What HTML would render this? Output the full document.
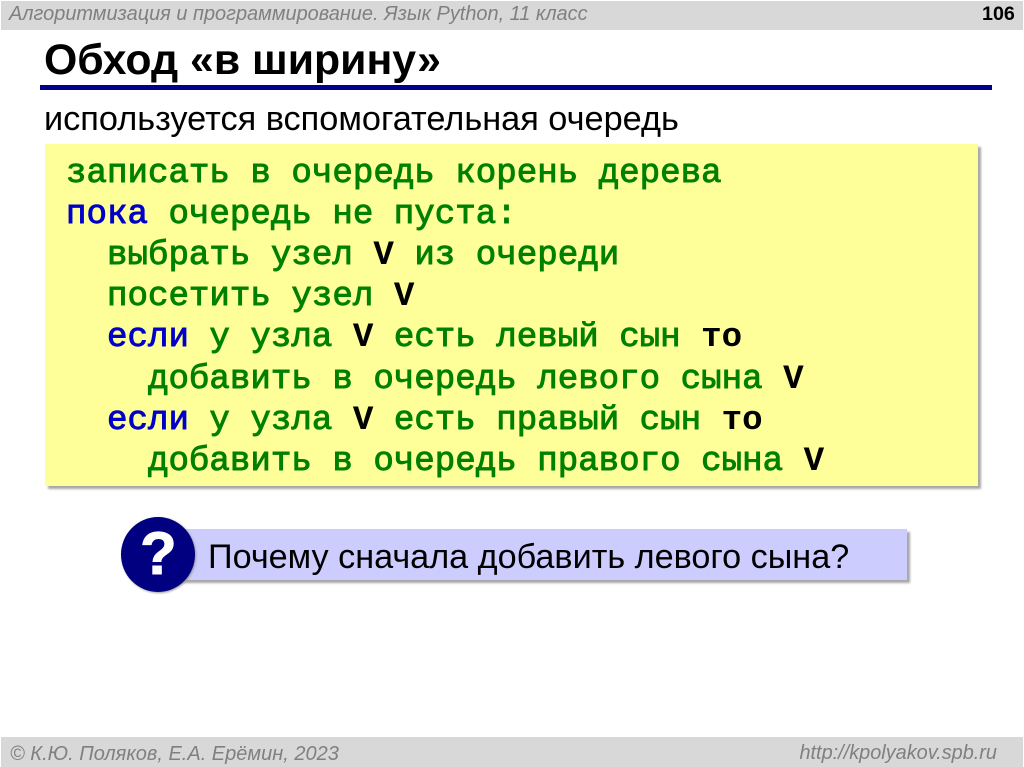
<!DOCTYPE html>
<html><head><meta charset="utf-8">
<style>
html,body{margin:0;padding:0;background:#fff}
body{width:1024px;height:767px;position:relative;overflow:hidden;font-family:"Liberation Sans",sans-serif}
.a{position:absolute;white-space:pre;line-height:1}
.code{font-family:"Liberation Mono",monospace;font-weight:normal;font-size:34.15px;color:#008000;left:66px;-webkit-text-stroke:0.9px currentColor}
.b{color:#0000c8}.k{color:#000;font-weight:bold;-webkit-text-stroke:0}
</style></head><body>
<div style="position:absolute;left:1px;top:1px;width:1022px;height:29px;background:#d8d8d8"></div>
<div style="position:absolute;left:1px;top:737px;width:1022px;height:30px;background:#d8d8d8"></div>
<div class="a" style="left:9px;top:5px;font-size:19.95px;font-style:italic;color:#808080">Алгоритмизация и программирование. Язык Python, 11 класс</div>
<div class="a" style="left:982px;top:5px;font-size:19.7px;font-weight:bold;color:#000">106</div>
<div class="a" style="left:44px;top:39px;font-size:42.8px;font-weight:bold;color:#000">Обход «в ширину»</div>
<div style="position:absolute;left:40px;top:85px;width:952px;height:5px;background:#00008b"></div>
<div class="a" style="left:44px;top:102px;font-size:34.3px;color:#000">используется вспомогательная очередь</div>
<div style="position:absolute;left:45px;top:144px;width:933px;height:342px;background:#ffff99;box-shadow:3px 3px 2px #a8a8a8"></div>
<div class="a code" style="top:157px">записать в очередь корень дерева</div>
<div class="a code" style="top:198px"><span class="b">пока</span> очередь не пуста:</div>
<div class="a code" style="top:239px">  выбрать узел <span class="k">V</span> из очереди</div>
<div class="a code" style="top:280px">  посетить узел <span class="k">V</span></div>
<div class="a code" style="top:321px">  <span class="b">если</span> у узла <span class="k">V</span> есть левый сын <span class="k">то</span></div>
<div class="a code" style="top:363px">    добавить в очередь левого сына <span class="k">V</span></div>
<div class="a code" style="top:404px">  <span class="b">если</span> у узла <span class="k">V</span> есть правый сын <span class="k">то</span></div>
<div class="a code" style="top:445px">    добавить в очередь правого сына <span class="k">V</span></div>
<div style="position:absolute;left:160px;top:529px;width:747px;height:51px;background:#ccccff;box-shadow:3px 3px 2px #a8a8a8"></div>
<div style="position:absolute;left:121px;top:517px;width:74px;height:75px;border-radius:50%;background:#000080;box-shadow:1px 1px 2px #999"></div>
<div class="a" style="left:140px;top:518px;font-size:60px;font-weight:bold;color:#fff;line-height:72px;-webkit-text-stroke:1px #fff">?</div>
<div class="a" style="left:208px;top:540px;font-size:34.2px;color:#000">Почему сначала добавить левого сына?</div>
<div class="a" style="left:10px;top:744px;font-size:20px;font-style:italic;color:#808080">© К.Ю. Поляков, Е.А. Ерёмин, 2023</div>
<div class="a" style="right:27px;top:744px;font-size:19.9px;font-style:italic;color:#808080">http://kpolyakov.spb.ru</div>
</body></html>
